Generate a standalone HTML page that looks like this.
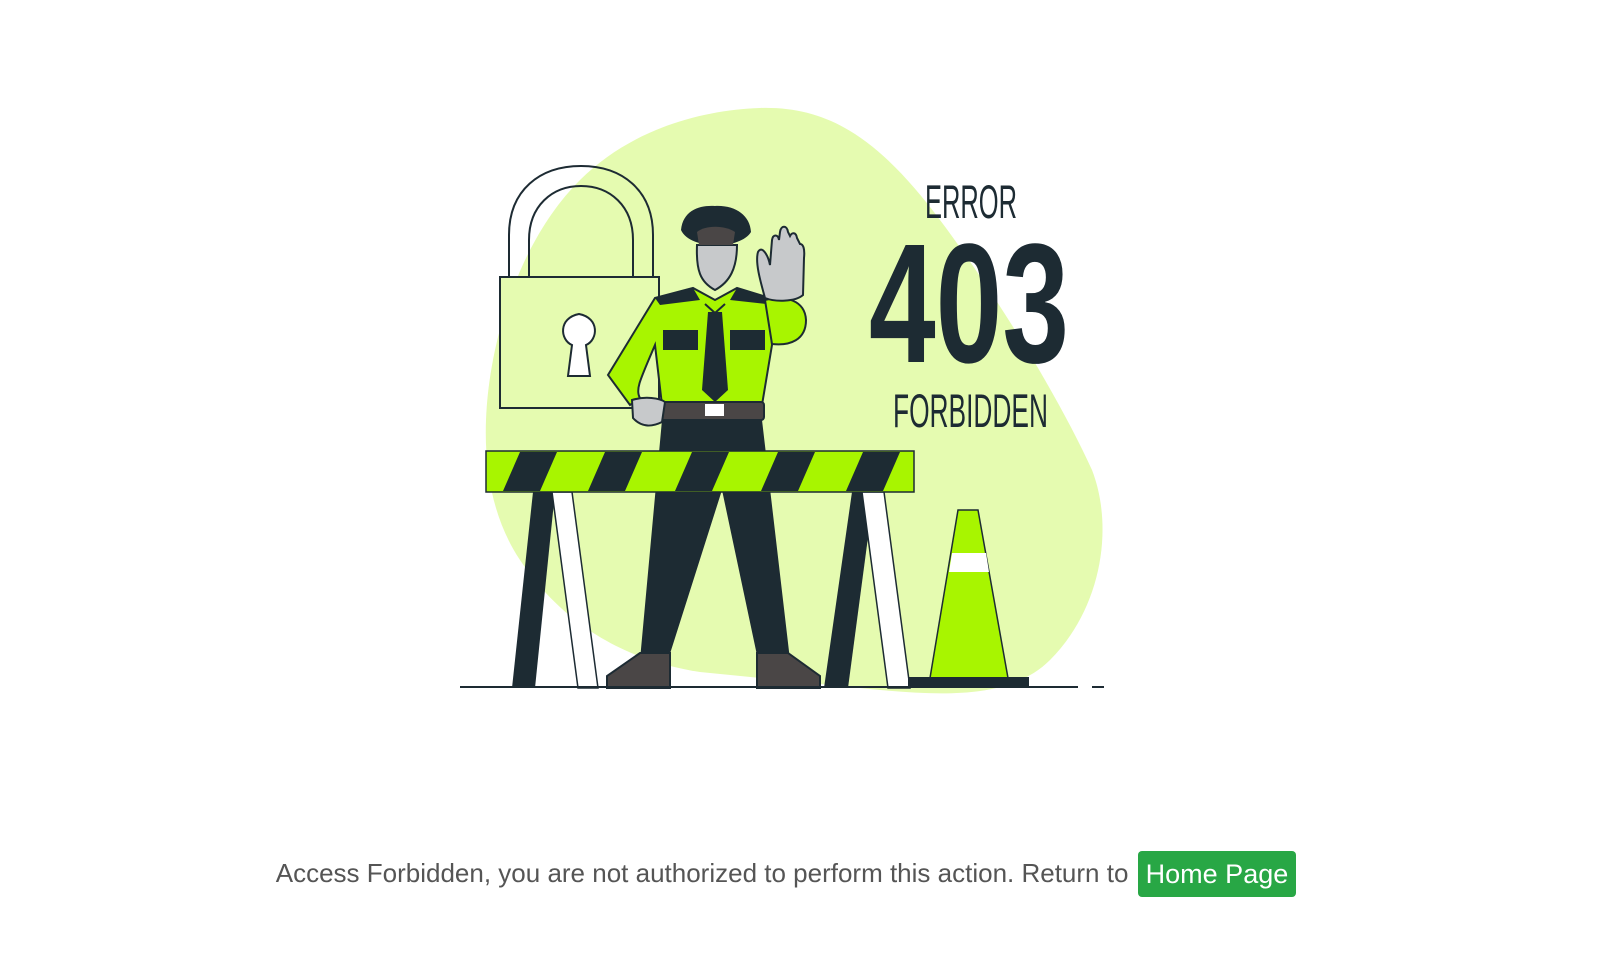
<!DOCTYPE html>
<html><head><meta charset="utf-8"><style>
html,body{margin:0;padding:0;background:#fff;width:1601px;height:980px;overflow:hidden}
svg{position:absolute;left:0;top:0}
.msg{position:absolute;left:0;width:1572px;top:851px;text-align:center;font-family:"Liberation Sans",sans-serif;font-size:26px;color:#555;line-height:44px;white-space:nowrap}
.btn{display:inline-block;background:#28a745;color:#fff;border-radius:4px;padding:0 8px;height:46px;line-height:46px;vertical-align:top;margin-left:2px;font-size:27px}
</style></head><body>
<svg width="1601" height="980" viewBox="0 0 1601 980" xmlns="http://www.w3.org/2000/svg">
<path d="M760 108 C830 106 880 140 940 220 C1000 300 1060 400 1092 470 C1115 530 1100 610 1050 660 C1010 700 940 695 880 690 L700 672 C620 660 560 620 520 560 C480 500 480 420 495 350 C510 280 540 220 580 180 C630 130 700 110 760 108 Z" fill="#e5fbb0"/>
<g fill="none" stroke="#1d2b33" stroke-width="2">
<path d="M509 276 V235 C509 190 540 166 581 166 C622 166 653 190 653 235 V276"/>
<path d="M529 276 V240 C529 206 552 186 581 186 C610 186 633 206 633 240 V276"/>
<rect x="500" y="277" width="159" height="131" fill="#e5fbb0"/>
<path d="M572 345 C560 340 558 318 579 314 C600 318 598 340 586 345 L590 376 H568 Z" fill="#fff"/>
</g>
<path d="M662 420 H762 L790 660 H758 L722 490 L668 660 H640 Z" fill="#1d2b33"/>
<path d="M640 653 H670 V688 H607 V676 Z" fill="#4a4646" stroke="#1d2b33" stroke-width="2"/>
<path d="M757 653 H788 L820 676 V688 H757 Z" fill="#4a4646" stroke="#1d2b33" stroke-width="2"/>
<path d="M655 298 L693 288 L715 300 L737 288 L770 298 L772 345 L762 405 H662 L655 345 C640 380 635 390 640 398 L630 405 L608 375 Z" fill="#a8f500" stroke="#1d2b33" stroke-width="2"/>
<path d="M655 298 L693 288 L700 300 L660 305 Z" fill="#1d2b33"/>
<path d="M737 288 L770 298 L766 304 L730 300 Z" fill="#1d2b33"/>
<path d="M708 312 L722 312 L728 390 L715 402 L702 390 Z" fill="#1d2b33"/>
<path d="M705 304 L715 313 L725 304" fill="none" stroke="#1d2b33" stroke-width="2"/>
<rect x="663" y="330" width="35" height="20" fill="#1d2b33"/>
<rect x="730" y="330" width="35" height="20" fill="#1d2b33"/>
<path d="M765 300 C785 295 805 300 806 320 C806 340 790 346 772 344 Z" fill="#a8f500" stroke="#1d2b33" stroke-width="2"/>
<path d="M765 298 C760 280 755 262 758 252 C762 245 768 255 770 265 L772 240 C773 234 778 234 779 240 L780 232 C781 225 787 225 788 232 L790 236 C792 232 796 232 797 238 L800 244 C803 244 805 248 804 258 L803 295 C795 302 775 302 765 298 Z" fill="#c7c9cb" stroke="#1d2b33" stroke-width="2"/>
<rect x="660" y="402" width="104" height="18" rx="3" fill="#4a4646" stroke="#1d2b33" stroke-width="2"/>
<rect x="705" y="404" width="19" height="12" fill="#fff"/>
<path d="M632 400 C645 396 660 398 665 402 L662 422 C650 428 640 426 633 418 Z" fill="#c7c9cb" stroke="#1d2b33" stroke-width="2"/>
<path d="M697 245 C696 270 700 282 715 290 C730 282 737 268 737 245 Z" fill="#c7c9cb" stroke="#1d2b33" stroke-width="2"/>
<path d="M681 230 C683 210 700 205 715 206 C735 205 750 215 751 232 C740 250 690 250 681 230 Z" fill="#1d2b33"/>
<path d="M697 232 C705 225 725 225 735 232 L733 245 H699 Z" fill="#4a4646"/>
<path d="M533 492 H555 L535 688 H512 Z" fill="#1d2b33"/>
<path d="M552 492 H572 L598 688 H578 Z" fill="#fff" stroke="#1d2b33" stroke-width="1.5"/>
<path d="M852 492 H874 L848 688 H824 Z" fill="#1d2b33"/>
<path d="M862 492 H884 L910 688 H888 Z" fill="#fff" stroke="#1d2b33" stroke-width="1.5"/>
<rect x="486" y="451" width="428" height="41" fill="#a8f500" stroke="#1d2b33" stroke-width="1.5"/>
<g fill="#1d2b33">
<path d="M520 452 H557 L540 491 H503 Z"/>
<path d="M605 452 H642 L625 491 H588 Z"/>
<path d="M692 452 H729 L712 491 H675 Z"/>
<path d="M778 452 H815 L798 491 H761 Z"/>
<path d="M863 452 H900 L883 491 H846 Z"/>
</g>
<path d="M958 510 H978 L1008 678 H930 Z" fill="#a8f500" stroke="#1d2b33" stroke-width="1.5"/>
<path d="M952 553 H986 L989 572 H949 Z" fill="#fff"/>
<rect x="908" y="677" width="121" height="10" fill="#1d2b33"/>
<path d="M460 687 H1078 M1092 687 H1104" stroke="#1d2b33" stroke-width="2"/>
<g fill="#1d2b33" font-family="'Liberation Sans Narrow','Liberation Sans',sans-serif">
<text x="925" y="218" font-size="47" textLength="92" lengthAdjust="spacingAndGlyphs">ERROR</text>
<text x="869" y="362" font-size="170" font-weight="bold" textLength="200" lengthAdjust="spacingAndGlyphs">403</text>
<text x="893" y="427" font-size="47" textLength="155" lengthAdjust="spacingAndGlyphs">FORBIDDEN</text>
</g>
</svg>
<div class="msg">Access Forbidden, you are not authorized to perform this action. Return to <span class="btn">Home Page</span></div>
</body></html>
